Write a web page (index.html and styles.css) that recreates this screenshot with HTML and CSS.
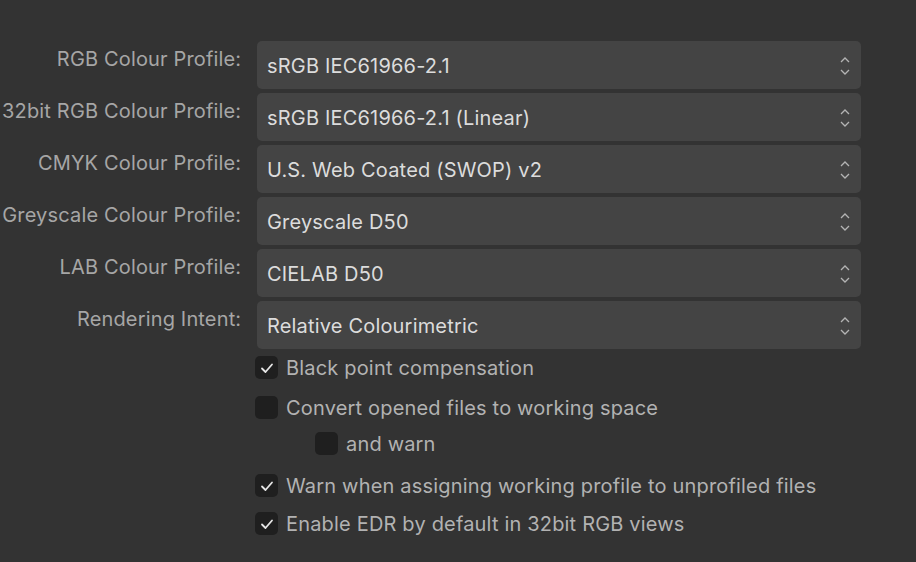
FILE: index.html
```html
<!DOCTYPE html>
<html>
<head>
<meta charset="utf-8">
<link rel="stylesheet" href="styles.css">
</head>
<body>
<div class="prefs">
  <div class="label">RGB Colour Profile:</div>
  <div class="select"><span>sRGB IEC61966-2.1</span><svg class="chev" viewBox="0 0 10 20" width="10" height="20"><path d="M1 6 L5 2 L9 6 M1 14 L5 18 L9 14"/></svg></div>
  <div class="label">32bit RGB Colour Profile:</div>
  <div class="select"><span>sRGB IEC61966-2.1 (Linear)</span><svg class="chev" viewBox="0 0 10 20" width="10" height="20"><path d="M1 6 L5 2 L9 6 M1 14 L5 18 L9 14"/></svg></div>
  <div class="label">CMYK Colour Profile:</div>
  <div class="select"><span>U.S. Web Coated (SWOP) v2</span><svg class="chev" viewBox="0 0 10 20" width="10" height="20"><path d="M1 6 L5 2 L9 6 M1 14 L5 18 L9 14"/></svg></div>
  <div class="label">Greyscale Colour Profile:</div>
  <div class="select"><span>Greyscale D50</span><svg class="chev" viewBox="0 0 10 20" width="10" height="20"><path d="M1 6 L5 2 L9 6 M1 14 L5 18 L9 14"/></svg></div>
  <div class="label">LAB Colour Profile:</div>
  <div class="select"><span>CIELAB D50</span><svg class="chev" viewBox="0 0 10 20" width="10" height="20"><path d="M1 6 L5 2 L9 6 M1 14 L5 18 L9 14"/></svg></div>
  <div class="label">Rendering Intent:</div>
  <div class="select"><span>Relative Colourimetric</span><svg class="chev" viewBox="0 0 10 20" width="10" height="20"><path d="M1 6 L5 2 L9 6 M1 14 L5 18 L9 14"/></svg></div>

  <div class="checks">
    <div class="check c1"><span class="box on"><svg viewBox="0 0 14 14" width="14" height="14"><path d="M2 7.5 L5.5 11 L12 3.5"/></svg></span><span>Black point compensation</span></div>
    <div class="check c2"><span class="box"></span><span>Convert opened files to working space</span></div>
    <div class="check c3 indent"><span class="box"></span><span>and warn</span></div>
    <div class="check c4"><span class="box on"><svg viewBox="0 0 14 14" width="14" height="14"><path d="M2 7.5 L5.5 11 L12 3.5"/></svg></span><span>Warn when assigning working profile to unprofiled files</span></div>
    <div class="check c5"><span class="box on"><svg viewBox="0 0 14 14" width="14" height="14"><path d="M2 7.5 L5.5 11 L12 3.5"/></svg></span><span>Enable EDR by default in 32bit RGB views</span></div>
  </div>
</div>
</body>
</html>
```

FILE: styles.css
```css
html, body {
  margin: 0;
  padding: 0;
  background: #333333;
  height: 100%;
}
body {
  font-family: Inter, "Noto Sans", "Liberation Sans", sans-serif;
  font-size: 20px;
  letter-spacing: 0.18px;
  overflow: hidden;
}
.prefs {
  display: grid;
  grid-template-columns: 241px 604px;
  column-gap: 16px;
  row-gap: 4px;
  padding-top: 41px;
}
.label {
  color: #a6a6a6;
  text-align: right;
  white-space: nowrap;
  padding-top: 6px;
  line-height: 24px;
  letter-spacing: 0.16px;
  margin-right: -0.3px;
}
.select {
  height: 48px;
  background: #444444;
  border-radius: 5px;
  display: flex;
  align-items: center;
  justify-content: space-between;
  padding: 0 10px 0 10px;
  color: #dcdcdc;
  box-sizing: border-box;
}
.select span {
  padding-top: 1px;
}
.chev {
  fill: none;
  stroke: #b4b4b4;
  stroke-width: 1.3;
  margin-right: 1px;
  margin-top: 2px;
}
.checks {
  grid-column: 2;
  display: flex;
  flex-direction: column;
  margin-left: -2px;
  margin-top: 3px;
}
.check {
  display: flex;
  align-items: center;
  gap: 8px;
  color: #b2b2b2;
  height: 23px;
}
.c2 { margin-top: 17px; }
.c3 { margin-top: 13px; }
.c4 { margin-top: 19px; }
.c5 { margin-top: 15px; }
.indent { padding-left: 60px; }
.box {
  width: 23px;
  height: 23px;
  border-radius: 5px;
  background: #1f1f1f;
  display: flex;
  align-items: center;
  justify-content: center;
  flex: none;
}
.box svg {
  fill: none;
  stroke: #e6e6e6;
  stroke-width: 1.8;
  stroke-linecap: round;
  stroke-linejoin: round;
}
```
